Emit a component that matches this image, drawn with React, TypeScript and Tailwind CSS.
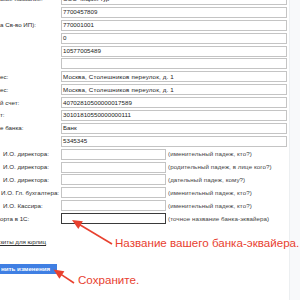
import React from "react";

type Row = { label?: string; lpad?: string; value: string; vt?: string };
type SmallRow = { label: string; lpad: string; hint: string; dark?: boolean };

const addr = "Москва, Столешников переулок, д. 1";

const rows: Row[] = [
  { label: "ское название:", lpad: "pl-0", value: 'ООО "Мария Тур"', vt: "tracking-[-0.2px]" },
  { value: "7700457809" },
  { label: "а Св-во ИП):", lpad: "pl-0", value: "770001001" },
  { value: "0" },
  { value: "10577005489" },
  { value: "" },
  { label: "ес:", lpad: "pl-0", value: addr, vt: "tracking-[0.16px]" },
  { label: "ес:", lpad: "pl-0", value: addr, vt: "tracking-[0.16px]" },
  { label: "й счет:", lpad: "pl-0", value: "40702810500000017589" },
  { label: "т:", lpad: "pl-0", value: "30101810550000000111" },
  { label: "е банка:", lpad: "pl-0", value: "Банк" },
  { value: "5345345" },
];

const smallRows: SmallRow[] = [
  { label: "И.О. директора:", lpad: "pl-[3px]", hint: "(именительный падеж, кто?)" },
  { label: "И.О. директора:", lpad: "pl-[3px]", hint: "(родительный падеж, в лице кого?)" },
  { label: "И.О. директора:", lpad: "pl-[3px]", hint: "(дательный падеж, кому?)" },
  { label: "И.О. Гл. бухгалтера:", lpad: "pl-[1px]", hint: "(именительный падеж, кто?)" },
  { label: "И.О. Кассира:", lpad: "pl-[3px]", hint: "(именительный падеж, кто?)" },
  { label: "орта в 1С:", lpad: "pl-0", hint: "(точное название банка-эквайера)", dark: true },
];

export default function App() {
  return (
    <div className="relative w-[300px] h-[300px] overflow-hidden bg-white font-['Liberation_Sans',Arial,sans-serif] text-[#2c2c2c]">
      <div className="flex h-full">
        <div className="w-[289px] shrink-0 bg-white">
          <div className="mt-[-6px] flex flex-col text-[6.2px] leading-none">
            {rows.map((r, i) => (
              <div key={i} className="flex h-[12.9px] items-start">
                <div className={`w-[61px] shrink-0 h-[11px] flex items-center whitespace-nowrap overflow-hidden ${r.lpad ?? "pl-0"}`}>
                  {r.label ?? ""}
                </div>
                <div className={`w-[226px] h-[11px] border border-[#c4c4c4] bg-white flex items-center pl-[1px] whitespace-nowrap overflow-hidden text-[#222] ${r.vt ?? "tracking-normal"}`}>
                  {r.value}
                </div>
              </div>
            ))}
            {smallRows.map((r, i) => (
              <div key={i} className="flex h-[12.9px] items-start">
                <div className={`w-[61px] shrink-0 h-[11px] flex items-center whitespace-nowrap ${r.lpad}`}>
                  {r.label}
                </div>
                <div
                  className={
                    r.dark
                      ? "w-[105px] h-[11px] shrink-0 border border-[#3a3a3a] bg-white"
                      : "w-[105px] h-[11px] shrink-0 border border-[#c4c4c4] bg-white"
                  }
                />
                <div className="h-[11px] flex items-center pl-[2px] whitespace-nowrap text-[#444] tracking-[0.08px]">
                  {r.hint}
                </div>
              </div>
            ))}
            <div className="mt-[12px] h-[8px] flex items-center">
              <span className="underline text-[#2c2c2c]">зиты для юрлиц</span>
            </div>
            <div className="mt-[18px] w-[57px] h-[9.5px] bg-[#3f7fe3] flex items-center pl-[1px] text-white font-bold whitespace-nowrap overflow-hidden">
              нить изменения
            </div>
          </div>
        </div>
        <div className="flex-1 bg-[#f8f9fa] border-l border-[#eceff1]" />
      </div>

      {/* annotations */}
      <svg className="absolute inset-0 pointer-events-none" width="300" height="300" viewBox="0 0 300 300">
        <line x1="112" y1="244" x2="79" y2="224.2" stroke="#e8412f" strokeWidth="1.6" />
        <polygon points="72,220 82.9,221.3 78.3,229" fill="#e8412f" />
        <line x1="74" y1="283" x2="61" y2="274.4" stroke="#e8412f" strokeWidth="1.6" />
        <polygon points="53.5,269.5 64.4,271.2 59.4,278.8" fill="#e8412f" />
      </svg>
      <div className="absolute left-[115px] top-[236.5px] text-[11.6px] leading-[11.6px] text-[#e8412f] whitespace-nowrap">
        Название вашего банка-эквайера.
      </div>
      <div className="absolute left-[78px] top-[274px] text-[11.6px] leading-[11.6px] text-[#e8412f] whitespace-nowrap">
        Сохраните.
      </div>
    </div>
  );
}
